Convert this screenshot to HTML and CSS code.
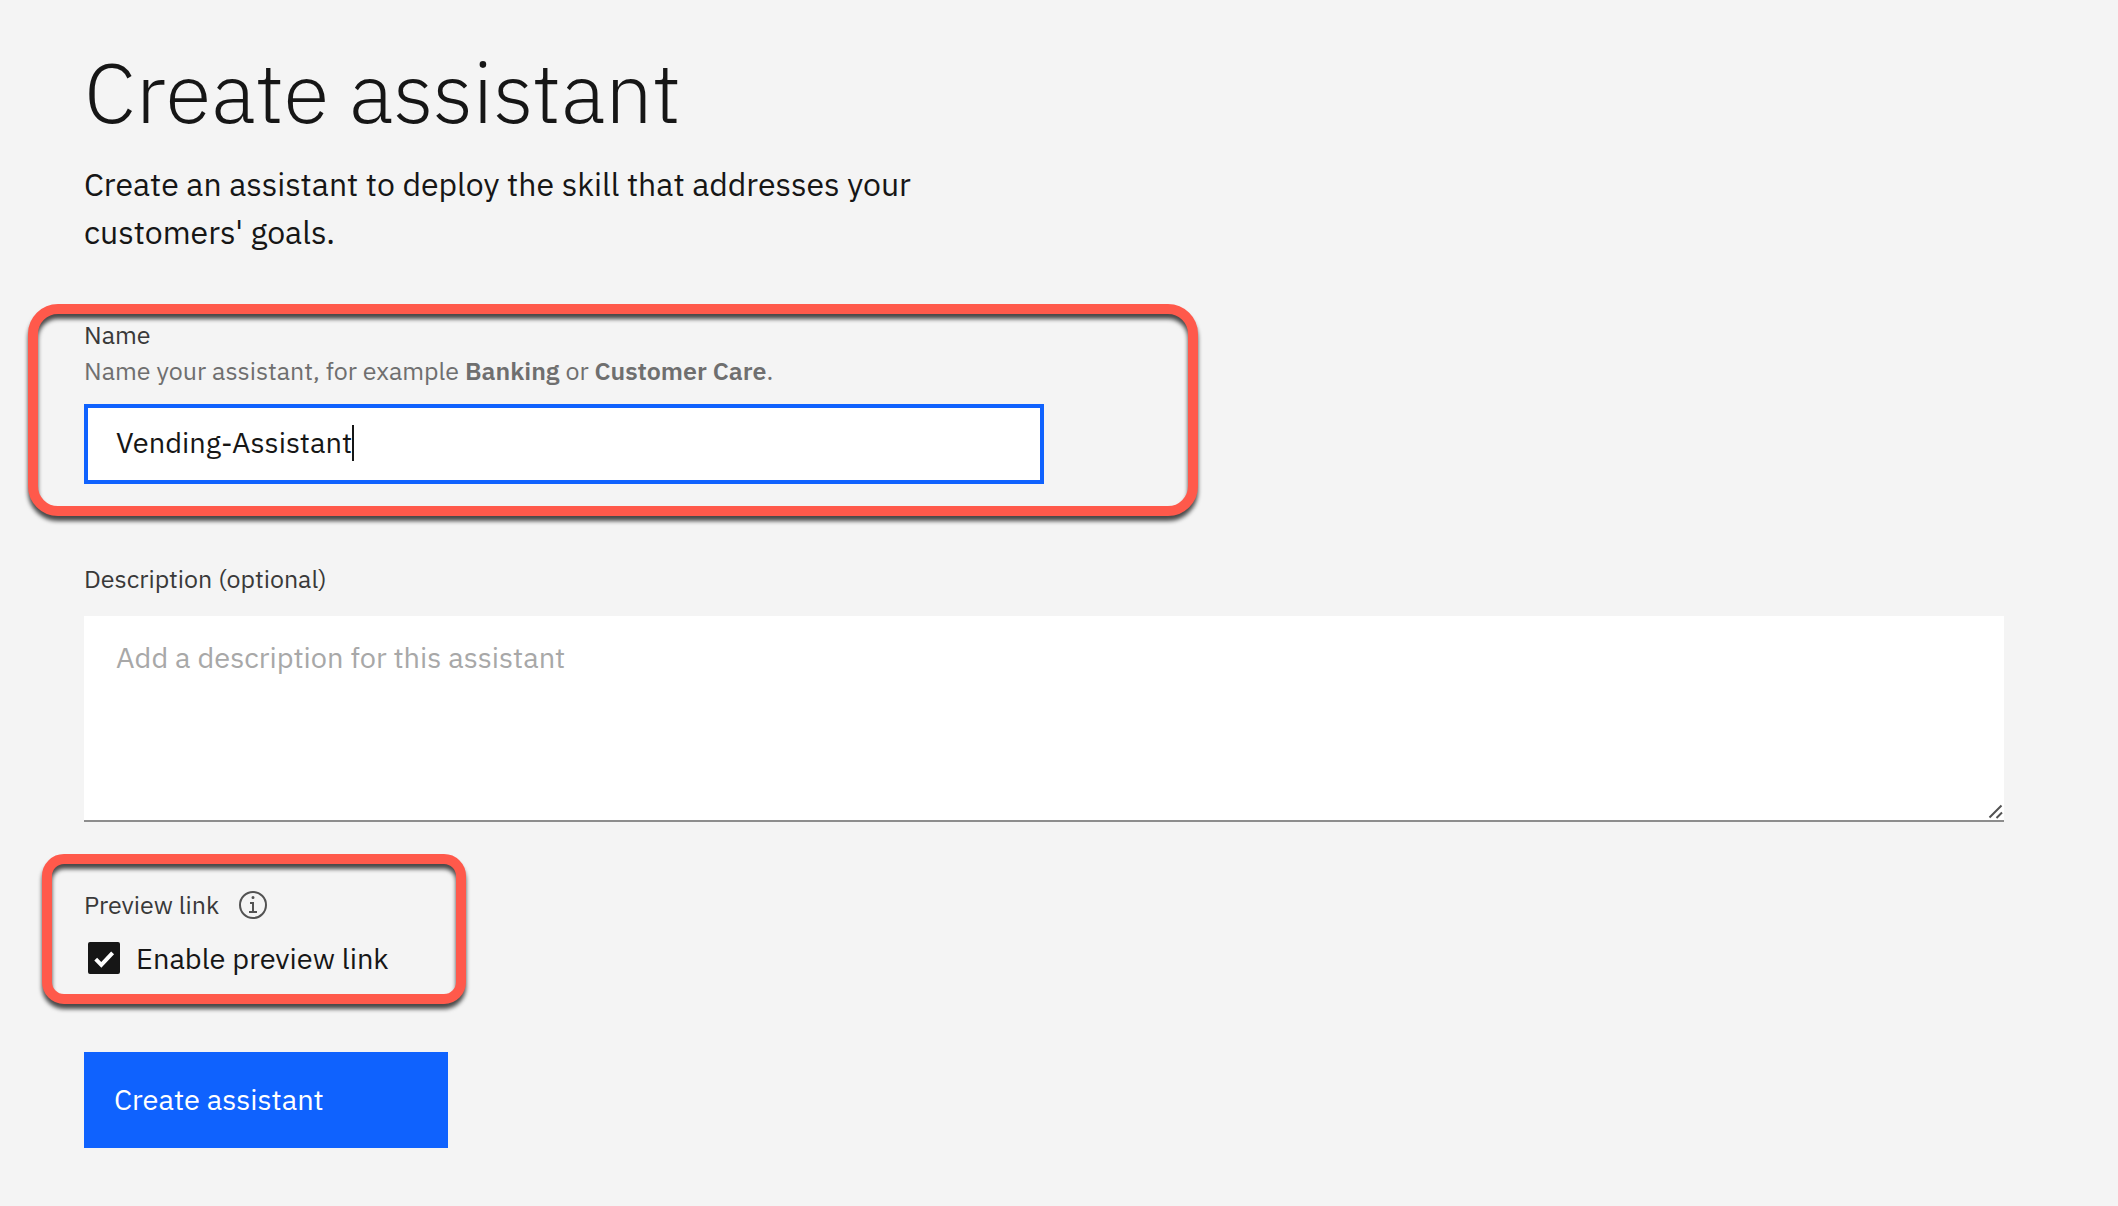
FILE: index.html
```
<!DOCTYPE html>
<html lang="en">
<head>
<meta charset="utf-8">
<meta name="viewport" content="width=device-width, initial-scale=1">
<title>Create assistant</title>
<link rel="stylesheet" href="styles.css">
</head>
<body>
<main class="page">
  <header class="intro">
    <h1 class="title">Create assistant</h1>
    <p class="lead">Create an assistant to deploy the skill that addresses your customers' goals.</p>
  </header>
  <form class="form">
    <div class="field field-name callout callout-name">
      <label class="label" for="name">Name</label>
      <p class="helper" id="name-help">Name your assistant, for example <strong>Banking</strong> or <strong>Customer Care</strong>.</p>
      <div class="input-wrap">
        <input class="input" id="name" type="text" value="Vending-Assistant" aria-describedby="name-help">
        <span class="caret" aria-hidden="true"></span>
      </div>
    </div>
    <div class="field field-description">
      <label class="label" for="description">Description (optional)</label>
      <div class="textarea-wrap">
        <textarea class="textarea" id="description" placeholder="Add a description for this assistant"></textarea>
        <svg class="grip" viewBox="0 0 16 16" aria-hidden="true"><path d="M1.500 14.500 13.500 2.500M8.500 15 14 9.500"/></svg>
      </div>
    </div>
    <fieldset class="preview callout callout-preview" aria-labelledby="preview-title">
      <div class="preview-head">
        <span class="label" id="preview-title">Preview link</span>
        <button class="info" type="button" aria-label="About the preview link">
          <svg viewBox="0 0 16 16" aria-hidden="true"><path d="M8.500 11V6.500h-2v1h1V11H6v1h4v-1zM8 3.500a.75.75 0 1 0 0 1.500.75.75 0 0 0 0-1.500z"/><path d="M8 15A7 7 0 1 1 8 1a7 7 0 0 1 0 14zM8 2a6 6 0 1 0 0 12A6 6 0 0 0 8 2z"/></svg>
        </button>
      </div>
      <div class="check-row">
        <span class="check">
          <input class="check-box" id="enable" type="checkbox" checked>
          <svg class="check-mark" viewBox="0 0 32 32" aria-hidden="true"><path d="M7.700 17.200 13.300 22.800 24.600 10.800"/></svg>
        </span>
        <label class="check-label" for="enable">Enable preview link</label>
      </div>
    </fieldset>
    <button class="submit" type="submit">Create assistant</button>
  </form>
</main>
</body>
</html>
```
FILE: styles.css
```
:root {
  --bg: #f4f4f4;
  --text: #161616;
  --text-label: #393939;
  --text-helper: #6f6f6f;
  --placeholder: #a8a8a8;
  --blue: #0f62fe;
  --mark: #ff594b;
}

* {
  box-sizing: border-box;
}

body {
  margin: 0;
  background: var(--bg);
  color: var(--text);
  font-family: "IBM Plex Sans", Roboto, sans-serif;
  font-size: 29px;
  line-height: 40px;
}

input,
textarea,
button {
  font: inherit;
  color: inherit;
  margin: 0;
  border-radius: 0;
}

.page {
  padding: 42px 114px 56px 84px;
}

.title {
  margin: 0 0 18px;
  font-size: 84px;
  line-height: 100px;
  font-weight: 300;
}

.lead {
  margin: 0;
  max-width: 960px;
  font-size: 32px;
  line-height: 48px;
}

.form {
  display: flex;
  flex-direction: column;
  padding-top: 61px;
}

.label,
.helper {
  margin: 0;
  font-size: 25px;
  line-height: 36px;
}

.label {
  display: block;
  color: var(--text-label);
}

.helper {
  color: var(--text-helper);
}

.helper strong {
  font-weight: 600;
}

.field-name {
  width: 50%;
}

.input-wrap,
.textarea-wrap {
  position: relative;
}

.input-wrap {
  margin-top: 15px;
}

.input {
  display: block;
  width: 100%;
  height: 80px;
  padding: 0 28px 4px;
  border: 4px solid var(--blue);
  background: #fff;
  outline: none;
}

/* Text cursor at the end of the entered name */
.caret {
  position: absolute;
  left: 268px;
  top: 21px;
  width: 2px;
  height: 36px;
  background: var(--text);
}

.field-description {
  margin-top: 77px;
}

.textarea-wrap {
  margin-top: 19px;
}

.textarea {
  display: block;
  width: 100%;
  height: 206px;
  padding: 21px 32px;
  border: 0;
  border-bottom: 2px solid #8d8d8d;
  background: #fff;
  outline: none;
  resize: none;
}

.textarea::placeholder {
  color: var(--placeholder);
  opacity: 1;
}

.grip {
  position: absolute;
  right: 0;
  bottom: 3px;
  width: 16px;
  height: 16px;
  fill: none;
  stroke: #525252;
  stroke-width: 2;
}

.preview {
  width: 364px;
  margin: 65px 0 0;
  padding: 0;
  border: 0;
}

.preview-head {
  display: flex;
  align-items: center;
  gap: 18px;
  height: 36px;
}

.info {
  display: flex;
  padding: 0;
  border: 0;
  background: none;
}

.info svg {
  width: 32px;
  height: 32px;
  fill: #525252;
}

.check-row {
  display: flex;
  align-items: center;
  gap: 16px;
  margin-top: 15px;
  padding-left: 4px;
}

.check {
  display: grid;
}

.check-box,
.check-mark {
  grid-area: 1 / 1;
  width: 32px;
  height: 32px;
}

.check-box {
  appearance: none;
  border: 2px solid var(--text);
  border-radius: 2px;
}

.check-box:checked {
  background: var(--text);
}

.check-mark {
  visibility: hidden;
  pointer-events: none;
  fill: none;
  stroke: #fff;
  stroke-width: 4;
}

.check-box:checked + .check-mark {
  visibility: visible;
}

.submit {
  width: 364px;
  height: 96px;
  margin-top: 74px;
  padding: 0 30px 2px;
  border: 0;
  background: var(--blue);
  color: #fff;
  text-align: left;
}

/* Red highlight frames drawn around a group */
.callout {
  position: relative;
}

.callout::after {
  content: "";
  position: absolute;
  border: 10px solid var(--mark);
  filter: drop-shadow(0 5px 2px rgba(0, 0, 0, 0.7));
  pointer-events: none;
}

.callout-name::after {
  inset: -13px -154px -32px -56px;
  border-radius: 30px;
}

.callout-preview::after {
  inset: -33px -18px -26px -42px;
  border-radius: 22px;
}
```
